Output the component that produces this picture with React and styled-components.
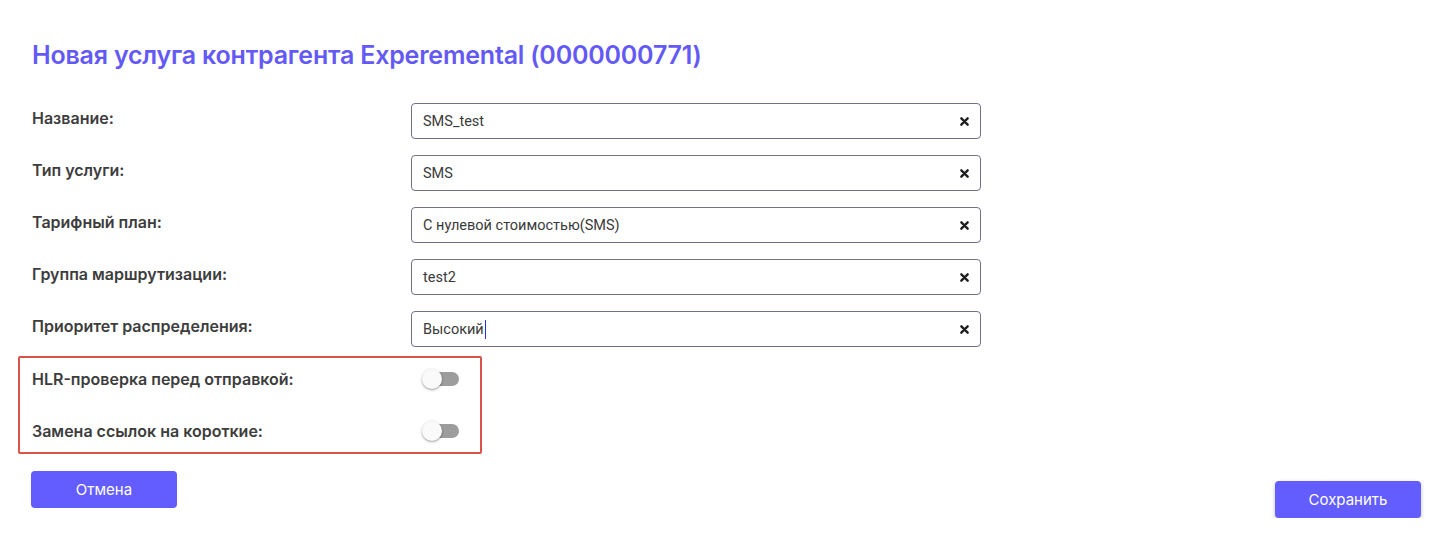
import React from "react";
import styled, { createGlobalStyle } from "styled-components";

const Global = createGlobalStyle`
  html, body { margin: 0; padding: 0; background: #ffffff; }
  body { font-family: "Inter", "Noto Sans", sans-serif; }
  * { box-sizing: border-box; }
`;

const Page = styled.div`
  padding: 40px 21px 0 32px;
  width: 1442px;
`;

const Title = styled.h1`
  margin: 0 0 33px 0;
  font-size: 25px;
  line-height: 30px;
  font-weight: 600;
  color: #6359f6;
  letter-spacing: -0.2px;
`;

const Form = styled.div`
  display: grid;
  grid-template-columns: 379px 570px;
  row-gap: 16px;
`;

const Label = styled.div`
  font-size: 16px;
  line-height: 20px;
  font-weight: 600;
  color: #3d3d3d;
  padding-top: 5px;
`;

const Field = styled.div`
  height: 36px;
  border: 1px solid #6f7285;
  border-radius: 4px;
  display: flex;
  align-items: center;
  padding: 0 11px 0 11px;
  font-family: "Roboto", "Noto Sans", sans-serif;
  font-size: 14.5px;
  color: #3a3a3a;
`;

const FieldText = styled.span`
  flex: 1;
  display: flex;
  align-items: center;
`;

const Caret = styled.span`
  display: inline-block;
  width: 1px;
  height: 19px;
  background: #2b2fd6;
  margin-left: 1px;
`;

const ClearIcon = styled.svg`
  width: 9px;
  height: 9px;
  flex: none;
`;

const Highlight = styled.div`
  margin: 9px 0 0 -14px;
  width: 464px;
  border: 2px solid #d9534a;
  border-radius: 2px;
  padding: 0 0 0 12px;
  display: grid;
  grid-template-columns: 379px 1fr;
  grid-auto-rows: 42px;
  row-gap: 10px;
  align-items: center;
`;

const ToggleLabel = styled(Label)`
  padding-top: 0;
`;

const Switch = styled.div`
  position: relative;
  width: 37px;
  height: 20px;
  margin-left: 11px;
  display: flex;
  align-items: center;
`;

const Track = styled.div`
  margin-left: 3px;
  width: 34px;
  height: 14px;
  border-radius: 7px;
  background: #9d9d9d;
`;

const Knob = styled.div`
  position: absolute;
  left: 0;
  top: 0;
  width: 20px;
  height: 20px;
  border-radius: 50%;
  background: #fafafa;
  box-shadow: 0 1px 3px rgba(0, 0, 0, 0.3), 0 1px 1px rgba(0, 0, 0, 0.12);
`;

const Footer = styled.div`
  display: flex;
  justify-content: space-between;
  align-items: flex-start;
  margin: 17px 0 0 -1px;
`;

const Button = styled.button`
  width: 146px;
  height: 37px;
  border: none;
  border-radius: 4px;
  background: #635cff;
  color: #ffffff;
  font-family: "Inter", "Noto Sans", sans-serif;
  font-size: 15px;
  font-weight: 400;
  cursor: pointer;
  margin-top: ${(p) => (p.$raised ? 10 : 0)}px;
  box-shadow: ${(p) =>
    p.$raised ? "0 2px 4px rgba(0,0,0,0.25)" : "none"};
`;

const X = () => (
  <ClearIcon viewBox="0 0 10 10">
    <path d="M1.5 1.5 L8.5 8.5 M8.5 1.5 L1.5 8.5" stroke="#1f1f1f" strokeWidth="2.6" strokeLinecap="round" />
  </ClearIcon>
);

const fields = [
  ["Название:", "SMS_test"],
  ["Тип услуги:", "SMS"],
  ["Тарифный план:", "С нулевой стоимостью(SMS)"],
  ["Группа маршрутизации:", "test2"],
  ["Приоритет распределения:", "Высокий", true],
];

const toggles = ["HLR-проверка перед отправкой:", "Замена ссылок на короткие:"];

export default function App() {
  return (
    <>
      <Global />
      <Page>
        <Title>Новая услуга контрагента Experemental (0000000771)</Title>
        <Form>
          {fields.map(([label, value, caret]) => (
            <React.Fragment key={label}>
              <Label>{label}</Label>
              <Field>
                <FieldText>
                  {value}
                  {caret && <Caret />}
                </FieldText>
                <X />
              </Field>
            </React.Fragment>
          ))}
        </Form>
        <Highlight>
          {toggles.map((t) => (
            <React.Fragment key={t}>
              <ToggleLabel>{t}</ToggleLabel>
              <Switch>
                <Track />
                <Knob />
              </Switch>
            </React.Fragment>
          ))}
        </Highlight>
        <Footer>
          <Button>Отмена</Button>
          <Button $raised>Сохранить</Button>
        </Footer>
      </Page>
    </>
  );
}
